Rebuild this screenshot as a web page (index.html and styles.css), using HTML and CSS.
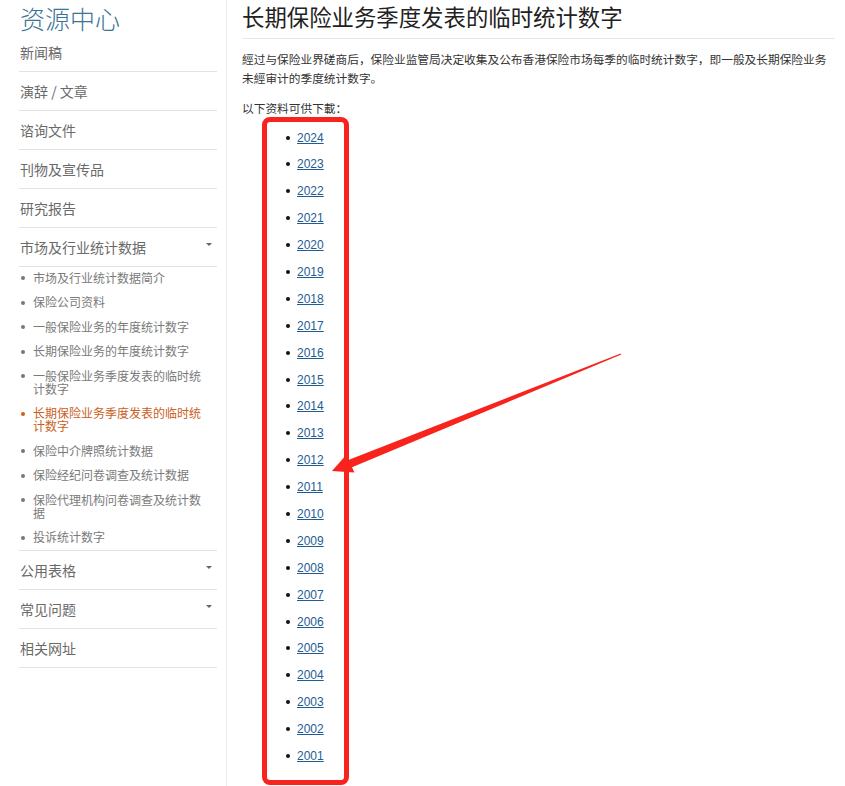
FILE: index.html
```html
<!DOCTYPE html>
<html lang="zh-CN">
<head>
<meta charset="utf-8">
<title>长期保险业务季度发表的临时统计数字</title>
<link rel="stylesheet" href="styles.css">
</head>
<body>
<div class="page">
  <aside class="sidebar">
    <div class="side-title">资源中心</div>
    <ul class="nav">
      <li class="nav-item"><span>新闻稿</span></li>
      <li class="nav-item"><span>演辞 / 文章</span></li>
      <li class="nav-item"><span>谘询文件</span></li>
      <li class="nav-item"><span>刊物及宣传品</span></li>
      <li class="nav-item"><span>研究报告</span></li>
      <li class="nav-item has-sub"><span>市场及行业统计数据</span><i class="caret"></i></li>
      <li class="sub-wrap">
        <ul class="sub">
          <li>市场及行业统计数据简介</li>
          <li>保险公司资料</li>
          <li>一般保险业务的年度统计数字</li>
          <li>长期保险业务的年度统计数字</li>
          <li>一般保险业务季度发表的临时统计数字</li>
          <li class="active">长期保险业务季度发表的临时统计数字</li>
          <li>保险中介牌照统计数据</li>
          <li>保险经纪问卷调查及统计数据</li>
          <li>保险代理机构问卷调查及统计数据</li>
          <li>投诉统计数字</li>
        </ul>
      </li>
      <li class="nav-item has-sub"><span>公用表格</span><i class="caret"></i></li>
      <li class="nav-item has-sub"><span>常见问题</span><i class="caret"></i></li>
      <li class="nav-item"><span>相关网址</span></li>
    </ul>
  </aside>
  <main class="main">
    <h1 class="title">长期保险业务季度发表的临时统计数字</h1>
    <p class="intro">經过与保险业界磋商后，保险业监管局决定收集及公布香港保险市场每季的临时统计数字，即一般及长期保险业务未經审计的季度统计数字。</p>
    <p class="lead">以下资料可供下載：</p>
    <ul class="years">
      <li><a href="#">2024</a></li>
      <li><a href="#">2023</a></li>
      <li><a href="#">2022</a></li>
      <li><a href="#">2021</a></li>
      <li><a href="#">2020</a></li>
      <li><a href="#">2019</a></li>
      <li><a href="#">2018</a></li>
      <li><a href="#">2017</a></li>
      <li><a href="#">2016</a></li>
      <li><a href="#">2015</a></li>
      <li><a href="#">2014</a></li>
      <li><a href="#">2013</a></li>
      <li><a href="#">2012</a></li>
      <li><a href="#">2011</a></li>
      <li><a href="#">2010</a></li>
      <li><a href="#">2009</a></li>
      <li><a href="#">2008</a></li>
      <li><a href="#">2007</a></li>
      <li><a href="#">2006</a></li>
      <li><a href="#">2005</a></li>
      <li><a href="#">2004</a></li>
      <li><a href="#">2003</a></li>
      <li><a href="#">2002</a></li>
      <li><a href="#">2001</a></li>
    </ul>
  </main>
  <svg class="annot" width="845" height="786" viewBox="0 0 845 786" aria-hidden="true">
    <polygon fill="#f7231c" points="621.3,354.6 352,467.2 354.4,472.6 332,471 346.6,454.4 349,459.8 620.7,353.4"/>
  </svg>
</div>
</body>
</html>
```

FILE: styles.css
```css
html, body {
  margin: 0;
  padding: 0;
  background: #fff;
}
body {
  font-family: "Liberation Sans", "Noto Sans CJK SC", sans-serif;
  color: #333;
}
.page {
  position: relative;
  display: flex;
  align-items: stretch;
  width: 845px;
  min-height: 786px;
}
.sidebar {
  width: 198px;
  flex: none;
  padding: 0 9px 0 19px;
  border-right: 1px solid #ececec;
}
.side-title {
  height: 33px;
  line-height: 36px;
  font-size: 25px;
  color: #3a7394;
  padding-left: 1px;
  font-family: "Noto Sans CJK SC", sans-serif;
  font-weight: 300;
}
.nav, .sub, .years {
  list-style: none;
  margin: 0;
  padding: 0;
}
.nav-item {
  display: flex;
  justify-content: space-between;
  align-items: center;
  padding: 9px 5px 9px 1px;
  line-height: 20px;
  font-size: 14px;
  color: #6a6a6a;
  border-bottom: 1px solid #e2e2e2;
  font-family: "Noto Sans CJK SC", sans-serif;
}
.caret {
  width: 0;
  height: 0;
  border-left: 3px solid transparent;
  border-right: 3px solid transparent;
  border-top: 3px solid #666;
  margin-top: -6px;
}
.sub-wrap {
  border-bottom: 1px solid #e2e2e2;
}
.sub li {
  position: relative;
  padding: 3.5px 8px 8px 14px;
  line-height: 13px;
  font-size: 12px;
  color: #7a7a7a;
  font-family: "Noto Sans CJK SC", sans-serif;
}
.sub li:last-child {
  padding-bottom: 7px;
}
.sub li::before {
  content: "";
  position: absolute;
  left: 2px;
  top: 9px;
  width: 4px;
  height: 4px;
  border-radius: 50%;
  background: #777;
}
.sub li.active {
  color: #c9601c;
}
.sub li.active::before {
  background: #c9601c;
}
.main {
  flex: 1;
  padding: 0 10px 0 15px;
}
.title {
  margin: 0;
  padding: 0 0 6px 0;
  line-height: 32px;
  font-size: 22.4px;
  font-weight: normal;
  color: #222;
  border-bottom: 1px solid #e8e8e8;
  font-family: "Noto Sans CJK SC", sans-serif;
}
.intro, .lead {
  margin: 9.5px 0 0 0;
  font-size: 11.7px;
  line-height: 19px;
  color: #333;
  font-family: "Noto Sans CJK SC", sans-serif;
}
.lead {
  margin-top: 11px;
}
.years {
  margin: 0 0 0 20px;
  padding: 9px 0 17px 30px;
  box-sizing: border-box;
  width: 87px;
  border: 5px solid #f7231c;
  border-radius: 8px;
}
.years li {
  position: relative;
  line-height: 14px;
  height: 14px;
  margin-bottom: 12.9px;
  font-size: 12px;
}
.years li:last-child {
  margin-bottom: 0;
}
.years li::before {
  content: "";
  position: absolute;
  left: -11px;
  top: 5px;
  width: 4px;
  height: 4px;
  border-radius: 50%;
  background: #111;
}
.years a {
  color: #1d5d93;
  text-decoration: underline;
}
.annot {
  position: absolute;
  left: 0;
  top: 0;
  pointer-events: none;
}
```
